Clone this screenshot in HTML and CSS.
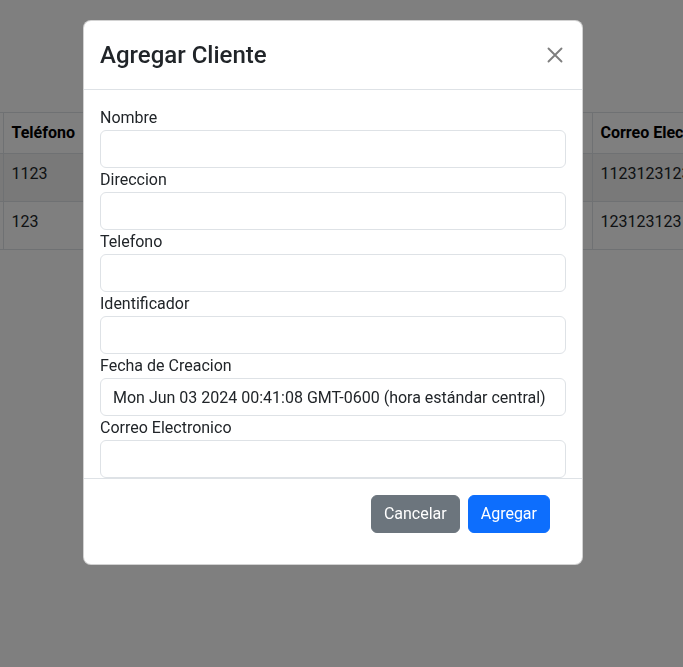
FILE: index.html
```html
<!DOCTYPE html>
<html lang="es">
<head>
<meta charset="utf-8">
<title>Clientes</title>
<link rel="stylesheet" href="styles.css">
</head>
<body>
<div class="page">
  <table class="clients">
    <thead>
      <tr>
        <th class="cut"></th>
        <th class="col-tel">Teléfono</th>
        <th class="col-mid"></th>
        <th class="col-mail">Correo Electronico</th>
      </tr>
    </thead>
    <tbody>
      <tr class="striped">
        <td class="cut"></td>
        <td>1123</td>
        <td class="tall"></td>
        <td>1123123123</td>
      </tr>
      <tr>
        <td class="cut"></td>
        <td>123</td>
        <td class="tall"></td>
        <td>123123123</td>
      </tr>
    </tbody>
  </table>
</div>

<div class="backdrop"></div>

<div class="modal">
  <div class="modal-header">
    <h4 class="modal-title">Agregar Cliente</h4>
    <button class="btn-close" type="button" aria-label="Close">
      <svg width="16" height="16" viewBox="0 0 16 16"><path d="M1.5 1.5 L14.5 14.5 M14.5 1.5 L1.5 14.5" stroke="#000" stroke-width="1.9" stroke-linecap="round" fill="none"/></svg>
    </button>
  </div>
  <div class="modal-body">
    <div class="field">
      <label>Nombre</label>
      <input class="form-control" type="text">
    </div>
    <div class="field">
      <label>Direccion</label>
      <input class="form-control" type="text">
    </div>
    <div class="field">
      <label>Telefono</label>
      <input class="form-control" type="text">
    </div>
    <div class="field">
      <label>Identificador</label>
      <input class="form-control" type="text">
    </div>
    <div class="field">
      <label>Fecha de Creacion</label>
      <input class="form-control" type="text" value="Mon Jun 03 2024 00:41:08 GMT-0600 (hora estándar central)">
    </div>
    <div class="field">
      <label>Correo Electronico</label>
      <input class="form-control" type="text">
    </div>
  </div>
  <div class="modal-footer">
    <button class="btn btn-secondary" type="button">Cancelar</button>
    <button class="btn btn-primary" type="button">Agregar</button>
  </div>
</div>
</body>
</html>
```

FILE: styles.css
```css
* { box-sizing: border-box; }

html, body {
  margin: 0;
  padding: 0;
  overflow: hidden;
}

body {
  font-family: Roboto, "Noto Sans", sans-serif;
  font-size: 16px;
  line-height: 24px;
  color: #212529;
  background: #fff;
  width: 683px;
  height: 667px;
}

.page {
  padding-top: 112px;
}

.clients {
  border-collapse: collapse;
  width: 900px;
  table-layout: fixed;
}

.clients th,
.clients td {
  border: 1px solid #dee2e6;
  padding: 8px;
  text-align: left;
  vertical-align: top;
  white-space: nowrap;
  overflow: hidden;
}

.clients th {
  font-weight: 700;
  color: #000;
}

.clients .cut {
  width: 3px;
  padding: 0;
  border-left: none;
}

.clients .col-tel { width: 100px; }
.clients .col-mid { width: 489px; }
.clients .col-mail { width: 308px; }

.clients td.tall {
  height: 48px;
}

.clients tr.striped td {
  background: #f2f2f2;
}

.backdrop {
  position: fixed;
  inset: 0;
  background: rgba(0, 0, 0, 0.5);
}

.modal {
  position: fixed;
  left: 83px;
  top: 20px;
  width: 500px;
  background: #fff;
  border: 1px solid rgba(0, 0, 0, 0.175);
  border-radius: 8px;
  display: flex;
  flex-direction: column;
}

.modal-header {
  display: flex;
  align-items: center;
  justify-content: space-between;
  padding: 16px;
  border-bottom: 1px solid #dee2e6;
}

.modal-title {
  margin: 0;
  font-size: 24px;
  line-height: 36px;
  font-weight: 500;
  color: #212529;
}

.btn-close {
  width: 24px;
  height: 24px;
  padding: 4px;
  margin-right: -1px;
  border: 0;
  background: transparent;
  opacity: 0.5;
  display: flex;
  align-items: center;
  justify-content: center;
}

.modal-body {
  height: 388px;
  overflow: hidden;
  padding: 16px 16px 0;
}

.field label {
  display: block;
}

.form-control {
  display: block;
  width: 100%;
  height: 38px;
  padding: 6px 12px;
  font: inherit;
  color: #212529;
  background: #fff;
  border: 1px solid #dee2e6;
  border-radius: 6px;
}

.modal-footer {
  display: flex;
  justify-content: flex-end;
  gap: 8px;
  padding: 16px 32px 31px;
  border-top: 1px solid #dee2e6;
}

.btn {
  font: inherit;
  height: 38px;
  padding: 6px 12px;
  border-radius: 6px;
  border: 1px solid transparent;
  color: #fff;
}

.btn-secondary {
  background: #6c757d;
  border-color: #6c757d;
}

.btn-primary {
  background: #0d6efd;
  border-color: #0d6efd;
}
```
